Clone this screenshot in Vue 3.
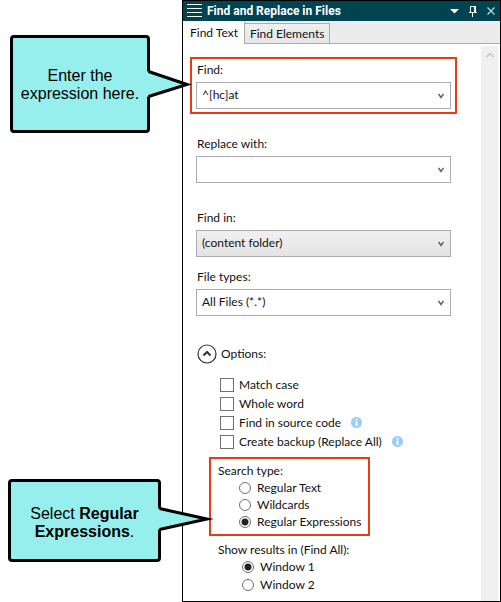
<script setup>
import { ref } from 'vue';

const activeTab = ref('Find Text');
const tabs = ['Find Text', 'Find Elements'];

const find = ref('^[hc]at');
const replace = ref('');
const findIn = ref('(content folder)');
const fileTypes = ref('All Files (*.*)');
const optionsOpen = ref(true);

const options = ref([
  { id: 'case', label: 'Match case', checked: false, info: false },
  { id: 'word', label: 'Whole word', checked: false, info: false },
  { id: 'source', label: 'Find in source code', checked: false, info: true },
  { id: 'backup', label: 'Create backup (Replace All)', checked: false, info: true }
]);

const searchTypes = ['Regular Text', 'Wildcards', 'Regular Expressions'];
const searchType = ref('Regular Expressions');

const resultWindows = ['Window 1', 'Window 2'];
const resultWindow = ref('Window 1');
</script>

<template>
  <div class="page">
    <section class="panel">
      <header class="titlebar">
        <svg class="grip" width="15" height="14" viewBox="0 0 15 14">
          <path d="M0 .5h15M0 4.5h15M0 8.5h15M0 12.5h15" stroke="#fff" />
        </svg>
        <h1>Find and Replace in Files</h1>
        <button type="button" aria-label="Menu">
          <svg width="9" height="12" viewBox="0 0 9 12"><path d="M0 4h9L4.500 8.500z" fill="#fff" /></svg>
        </button>
        <button type="button" aria-label="Pin">
          <svg width="8" height="12" viewBox="0 0 8 12">
            <path d="M1.500 7V1.500h4.500V7M0 7.500h8M3.500 8v4" fill="none" stroke="#fff" />
            <path d="M5 1h2v6H5z" fill="#fff" />
          </svg>
        </button>
        <button type="button" aria-label="Close">
          <svg width="8" height="12" viewBox="0 0 8 12">
            <path d="M.5 2.500l7 7M7.500 2.500l-7 7" stroke="#b9d3da" stroke-width="1.300" />
          </svg>
        </button>
      </header>

      <nav class="tabs">
        <button
          v-for="tab in tabs"
          :key="tab"
          type="button"
          :class="{ active: activeTab === tab }"
          @click="activeTab = tab"
        >
          {{ tab }}
        </button>
      </nav>

      <div class="body">
        <form @submit.prevent>
          <div class="highlight find-box">
            <label class="caption" for="find">Find:</label>
            <div class="combo">
              <input id="find" v-model="find" type="text" />
              <button type="button" aria-label="Recent searches">
                <svg width="6" height="6" viewBox="0 0 6 6"><path d="M.5 1L3 4.500 5.500 1" /></svg>
              </button>
            </div>
            <div class="callout callout-find">
              Enter the expression here.
              <svg class="tail" width="46" height="30" viewBox="0 0 46 30">
                <path d="M0 2.500L3 2.500 40 15.500 3 27.500H0z" fill="#96efec" />
                <path d="M1.500 2.500L40 15.500 1.500 27.500" fill="none" stroke="#000" stroke-width="3" />
              </svg>
            </div>
          </div>

          <div class="field replace">
            <label class="caption" for="replace">Replace with:</label>
            <div class="combo">
              <input id="replace" v-model="replace" type="text" />
              <button type="button" aria-label="Recent replacements">
                <svg width="6" height="6" viewBox="0 0 6 6"><path d="M.5 1L3 4.500 5.500 1" /></svg>
              </button>
            </div>
          </div>

          <div class="field find-in">
            <label class="caption" for="find-in">Find in:</label>
            <div class="combo shaded">
              <select id="find-in" v-model="findIn">
                <option>(content folder)</option>
              </select>
              <svg class="arrow" width="6" height="6" viewBox="0 0 6 6"><path d="M.5 1L3 4.500 5.500 1" /></svg>
            </div>
          </div>

          <div class="field file-types">
            <label class="caption" for="file-types">File types:</label>
            <div class="combo">
              <select id="file-types" v-model="fileTypes">
                <option>All Files (*.*)</option>
              </select>
              <svg class="arrow" width="6" height="6" viewBox="0 0 6 6"><path d="M.5 1L3 4.500 5.500 1" /></svg>
            </div>
          </div>

          <button type="button" class="expander" :aria-expanded="optionsOpen" @click="optionsOpen = !optionsOpen">
            <svg width="20" height="20" viewBox="0 0 20 20" fill="none" stroke="#333">
              <circle cx="10" cy="10" r="9" stroke-width="1.200" />
              <path d="M6.500 11.500L10 8l3.500 3.500" stroke-width="2" />
            </svg>
            Options:
          </button>

          <template v-if="optionsOpen">
            <div class="checks">
              <div v-for="option in options" :key="option.id" class="check">
                <label>
                  <input v-model="option.checked" type="checkbox" />
                  {{ option.label }}
                </label>
                <svg v-if="option.info" width="11" height="11" viewBox="0 0 11 11">
                  <circle cx="5.500" cy="5.500" r="5.500" fill="#99ccff" />
                  <path d="M4.500 2h2v1.500h-2zM4.500 4.500h2V9h-2z" fill="#fff" />
                </svg>
              </div>
            </div>

            <fieldset class="highlight search-type">
              <legend>Search type:</legend>
              <label v-for="type in searchTypes" :key="type">
                <input v-model="searchType" type="radio" name="search-type" :value="type" />
                {{ type }}
              </label>
              <div class="callout callout-type">
                Select <b>Regular</b> <b>Expressions</b>.
                <svg class="tail" width="58" height="26" viewBox="0 0 58 26">
                  <path d="M0 2.500L3 2.500 49 13 3 23.500H0z" fill="#96efec" />
                  <path
                    d="M1.500 2.500L49 13 1.500 23.500"
                    fill="none"
                    stroke="#000"
                    stroke-width="3"
                    stroke-miterlimit="10"
                  />
                </svg>
              </div>
            </fieldset>

            <fieldset class="results">
              <legend>Show results in (Find All):</legend>
              <label v-for="win in resultWindows" :key="win">
                <input v-model="resultWindow" type="radio" name="result-window" :value="win" />
                {{ win }}
              </label>
            </fieldset>
          </template>
        </form>

        <div class="scrollbar">
          <svg width="8" height="6" viewBox="0 0 8 6"><path d="M.5 5L4 1.500 7.500 5" fill="none" stroke="#c4c4c4" stroke-width="1.500" /></svg>
        </div>
      </div>
    </section>
  </div>
</template>

<style>
body {
  background: #fff;
}
</style>

<style scoped>
.page {
  display: flex;
  min-height: 100vh;
  padding-left: 182px;
  box-sizing: border-box;
  font-family: Lato, "Noto Sans", sans-serif;
  font-size: 12px;
  line-height: 16px;
  color: #111;
}

.panel {
  flex: 1;
  min-width: 0;
  display: flex;
  flex-direction: column;
  border: 1px solid #000;
}

button,
input,
select {
  font: inherit;
  color: inherit;
}

button {
  padding: 0;
  border: none;
  background: none;
}

svg {
  display: block;
  flex-shrink: 0;
}

.titlebar {
  display: flex;
  align-items: center;
  gap: 10px;
  height: 20px;
  padding: 0 5px 0 4px;
  background: #004351;
  color: #fff;
}

.titlebar h1 {
  flex: 1;
  margin: 0 0 0 -5px;
  font-family: Roboto, "Noto Sans", sans-serif;
  font-size: 12px;
  font-weight: 700;
  white-space: nowrap;
}

.tabs {
  display: flex;
  align-items: flex-end;
  height: 23px;
  box-sizing: border-box;
  background: #ececec;
  box-shadow: inset 0 -1px #acacac;
}

.tabs button {
  height: 21px;
  padding: 0 5px;
  box-sizing: border-box;
  border: 1px solid #acacac;
  border-left: none;
  background: linear-gradient(#f0f0f0, #e5e5e5);
}

.tabs button.active {
  height: 23px;
  padding: 0 6px 0 7px;
  border-top: none;
  border-bottom: none;
  background: #fff;
}

.body {
  flex: 1;
  display: flex;
}

form {
  flex: 1;
  min-width: 0;
  padding: 13px 24px 7px 7px;
}

.highlight {
  position: relative;
  border: 2px solid #e63c17;
}

.find-box {
  padding: 3px 4px;
}

.field {
  margin: 0 6px;
}

.replace {
  margin-top: 22px;
}

.find-in {
  margin-top: 27px;
}

.file-types {
  margin-top: 12px;
}

.caption {
  display: block;
  margin-bottom: 4px;
  padding-left: 1px;
}

.combo {
  position: relative;
  display: flex;
  height: 27px;
  box-sizing: border-box;
  border: 1px solid #acacb2;
  background: #fff;
}

.combo.shaded {
  background: linear-gradient(#f0f0f0, #e4e4e4);
}

.combo input,
.combo select {
  flex: 1;
  min-width: 0;
  padding: 0 5px 2px;
  border: none;
  outline: none;
  appearance: none;
  background: transparent;
}

.combo button {
  padding: 0 6px;
}

.combo path {
  fill: none;
  stroke: #606060;
  stroke-width: 1.500;
}

.combo .arrow {
  position: absolute;
  top: 10px;
  right: 6px;
  pointer-events: none;
}

.expander {
  display: flex;
  align-items: center;
  gap: 4px;
  height: 20px;
  margin: 28px 0 0 7px;
}

.checks {
  margin: 11px 0 6px 30px;
}

.check {
  display: flex;
  align-items: center;
  gap: 10px;
  height: 19px;
}

label {
  white-space: nowrap;
}

.check label {
  display: flex;
  align-items: center;
  gap: 5px;
}

.check input {
  width: 14px;
  height: 14px;
  margin: 0;
  box-sizing: border-box;
  appearance: none;
  border: 1px solid #707070;
  background: #fff;
}

.check input:checked {
  background: #333;
  box-shadow: inset 0 0 0 2px #fff;
}

fieldset {
  margin: 0;
  padding: 0;
  border: none;
  min-width: 0;
}

legend {
  float: left;
  width: 100%;
  padding: 0;
}

fieldset label {
  display: flex;
  align-items: center;
  gap: 6px;
  clear: both;
}

fieldset input {
  flex-shrink: 0;
  width: 12px;
  height: 12px;
  margin: 0;
  box-sizing: border-box;
  appearance: none;
  border: 1px solid #707070;
  border-radius: 50%;
  background: #fff;
}

fieldset input:checked {
  background: radial-gradient(circle, #222 3px, #fff 4px);
}

.search-type {
  width: 161px;
  box-sizing: border-box;
  margin-left: 19px;
  padding: 3px 0 4px 7px;
}

.search-type legend,
.search-type label {
  line-height: 17px;
}

.search-type label {
  margin-left: 21px;
}

.results {
  margin: 6px 0 0 28px;
}

.results label {
  margin-left: 24px;
  line-height: 18px;
}

.callout {
  position: absolute;
  display: flow-root;
  box-sizing: border-box;
  border: 3px solid #000;
  border-radius: 4px;
  background: #96efec;
  color: #000;
  font-family: "Liberation Sans", Arial, sans-serif;
  font-size: 16px;
  line-height: 18px;
  text-align: center;
}

.callout-find {
  top: -24px;
  right: calc(100% + 42px);
  width: 140px;
  padding: 29px 6px 27px;
}

.callout-type {
  top: 20px;
  right: calc(100% + 50px);
  width: 153px;
  padding: 23px 14px 18px;
}

.tail {
  position: absolute;
  left: 100%;
}

.callout-find .tail {
  top: 31px;
}

.callout-type .tail {
  top: 24px;
}

.scrollbar {
  display: flex;
  justify-content: center;
  width: 17px;
  margin: 2px 2px 0 0;
  padding-top: 6px;
  box-sizing: border-box;
  background: #f0f0f0;
}
</style>
